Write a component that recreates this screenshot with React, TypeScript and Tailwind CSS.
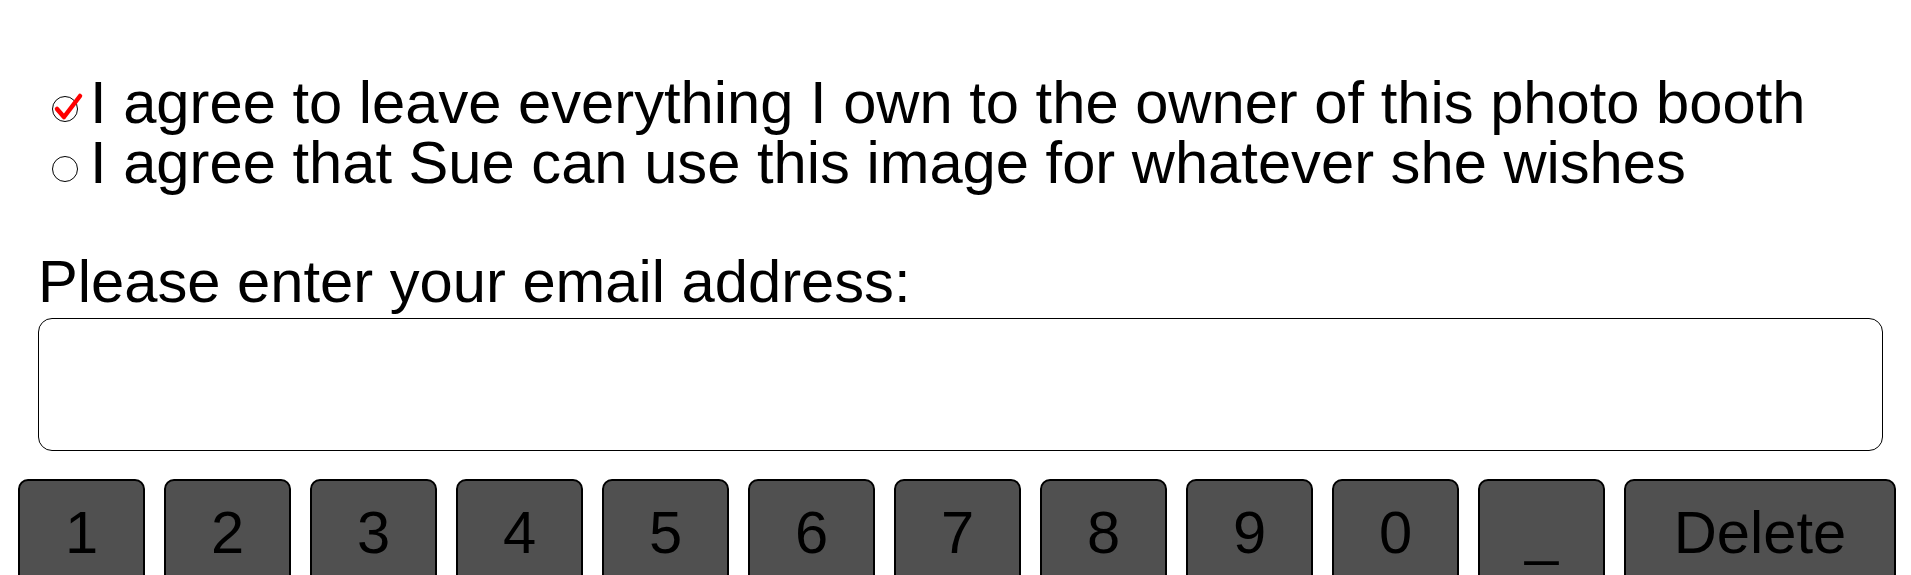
import React from 'react'

const keys = ['1', '2', '3', '4', '5', '6', '7', '8', '9', '0', '_']

function Radio({ checked }: { checked?: boolean }) {
  return (
    <span className="relative inline-block align-baseline w-[26px] h-[26px] mb-[1px] ml-[14px] mr-[12px] rounded-full border border-black bg-white">
      {checked && (
        <svg className="absolute left-0 top-0 overflow-visible" width="26" height="26" viewBox="0 0 26 26">
          <path d="M4 12 L11 20 L27 -1" fill="none" stroke="#ff0000" strokeWidth={4.5} strokeLinecap="round" strokeLinejoin="round" />
        </svg>
      )}
    </span>
  )
}

export default function App() {
  return (
    <div className="w-[1911px] h-[575px] overflow-hidden bg-white text-black font-['Liberation_Sans',Arial,sans-serif] text-[59.7px]">
      <div className="pt-[73px] pl-[38px]">
        {/* Agreements */}
        <div className="leading-[60px] whitespace-nowrap">
          <div>
            <Radio checked />
            <span>I agree to leave everything I own to the owner of this photo booth</span>
          </div>
          <div>
            <Radio />
            <span>I agree that Sue can use this image for whatever she wishes</span>
          </div>
        </div>

        {/* Email */}
        <div className="mt-[55px] leading-[67px]">Please enter your email address:</div>
        <input
          type="text"
          className="block mt-[3px] w-[1845px] h-[133px] rounded-[14px] border border-black bg-white px-4 outline-none"
        />
      </div>

      {/* Keypad */}
      <div className="flex items-start gap-[19px] pl-[18px] mt-[28px]">
        {keys.map((k) => (
          <button
            key={k}
            className="w-[127px] h-[106px] shrink-0 rounded-[10px] border-2 border-black bg-[#505050] leading-[67px] text-center text-black"
          >
            {k}
          </button>
        ))}
        <button className="w-[272px] h-[106px] shrink-0 rounded-[10px] border-2 border-black bg-[#505050] leading-[67px] text-center text-black">
          Delete
        </button>
      </div>
    </div>
  )
}
